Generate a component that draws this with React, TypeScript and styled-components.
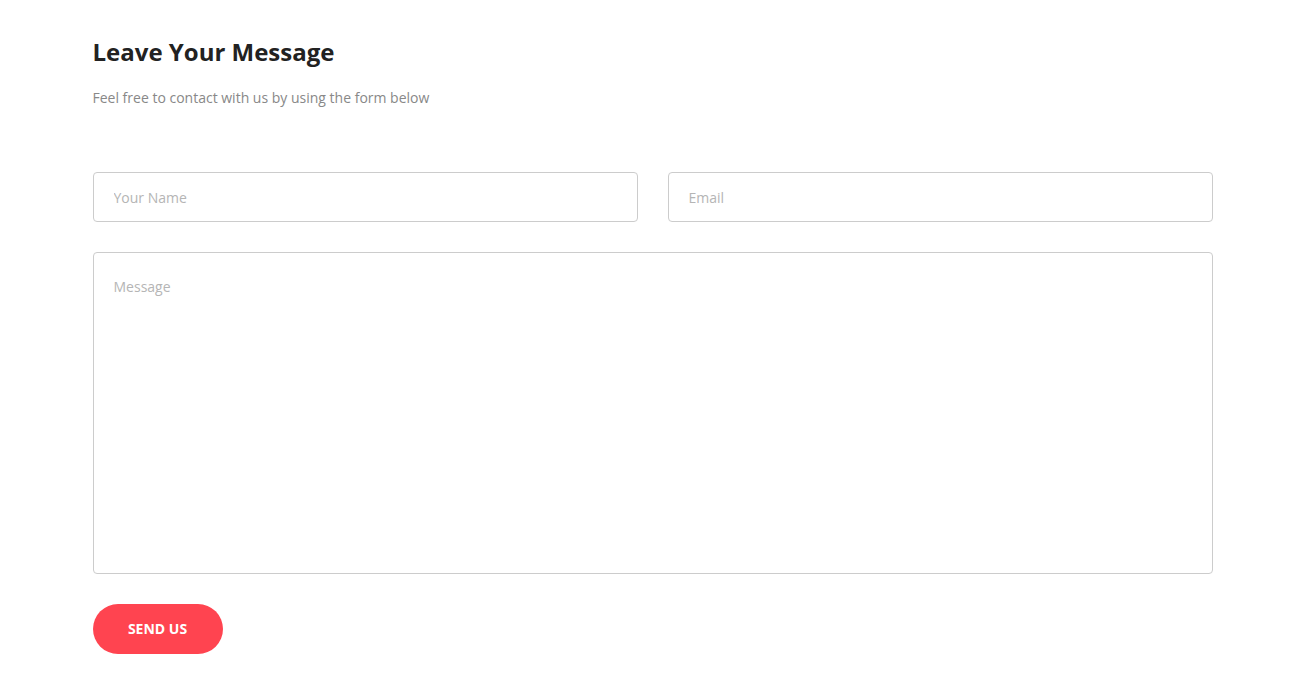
import React from "react";
import styled, { createGlobalStyle } from "styled-components";

const GlobalStyle = createGlobalStyle`
  html, body {
    margin: 0;
    padding: 0;
    background: #ffffff;
    font-family: "Open Sans", "Noto Sans", Arial, sans-serif;
  }
  * {
    box-sizing: border-box;
  }
`;

const Section = styled.section`
  max-width: 1120px;
  margin: 0 auto;
  padding: 37px 0 30px;
`;

const Title = styled.h2`
  margin: 0;
  font-size: 24px;
  line-height: 29px;
  font-weight: 700;
  color: #222222;
`;

const Lead = styled.p`
  margin: 22px 0 0;
  font-size: 14px;
  line-height: 20px;
  color: #888888;
`;

const Form = styled.form`
  margin-top: 64px;
  display: flex;
  flex-direction: column;
  gap: 30px;
`;

const Row = styled.div`
  display: grid;
  grid-template-columns: 1fr 1fr;
  gap: 30px;
`;

const fieldBase = `
  width: 100%;
  border: 1px solid #cccccc;
  border-radius: 4px;
  padding: 0 20px;
  font-family: "Open Sans", "Noto Sans", Arial, sans-serif;
  font-size: 14px;
  color: #333333;
  background: #ffffff;
  outline: none;
  &::placeholder {
    color: #b5b5b5;
  }
`;

const Input = styled.input`
  ${fieldBase}
  height: 50px;
`;

const TextArea = styled.textarea`
  ${fieldBase}
  display: block;
  height: 322px;
  padding-top: 24px;
  line-height: 20px;
  resize: none;
`;

const SendButton = styled.button`
  align-self: flex-start;
  width: 130px;
  height: 50px;
  padding: 0 0 2px;
  border: none;
  border-radius: 25px;
  background: #ff4450;
  color: #ffffff;
  font-family: "Open Sans", "Noto Sans", Arial, sans-serif;
  font-size: 14px;
  font-weight: 700;
  text-transform: uppercase;
  cursor: pointer;
`;

const App = () => {
  return (
    <>
      <GlobalStyle />
      <Section>
        <Title>Leave Your Message</Title>
        <Lead>Feel free to contact with us by using the form below</Lead>
        <Form onSubmit={(e) => e.preventDefault()}>
          <Row>
            <Input type="text" placeholder="Your Name" />
            <Input type="email" placeholder="Email" />
          </Row>
          <TextArea placeholder="Message" />
          <SendButton type="submit">Send us</SendButton>
        </Form>
      </Section>
    </>
  );
};

export default App;
